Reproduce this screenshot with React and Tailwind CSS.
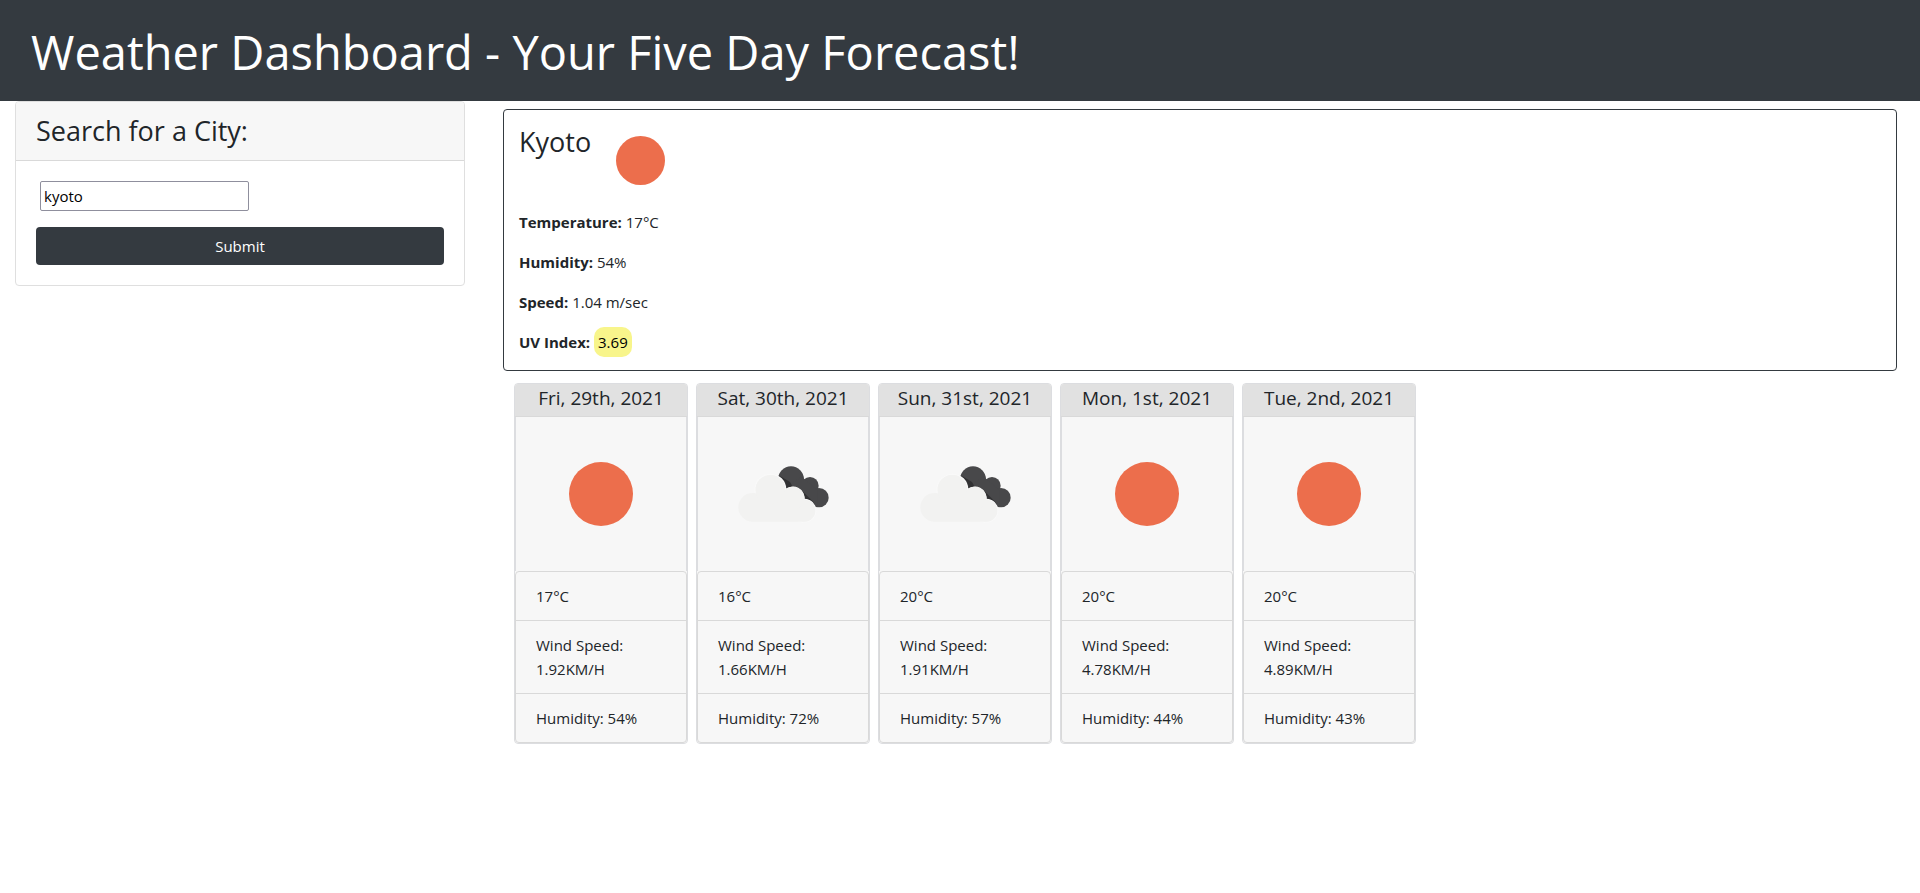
import { useState } from "react";

const forecast = [
  { date: "Fri, 29th, 2021", icon: "sun", temp: "17°C", wind: "1.92KM/H", humidity: "54%" },
  { date: "Sat, 30th, 2021", icon: "clouds", temp: "16°C", wind: "1.66KM/H", humidity: "72%" },
  { date: "Sun, 31st, 2021", icon: "clouds", temp: "20°C", wind: "1.91KM/H", humidity: "57%" },
  { date: "Mon, 1st, 2021", icon: "sun", temp: "20°C", wind: "4.78KM/H", humidity: "44%" },
  { date: "Tue, 2nd, 2021", icon: "sun", temp: "20°C", wind: "4.89KM/H", humidity: "43%" },
];

function Sun({ className }) {
  return (
    <svg viewBox="0 0 64 64" className={className} role="img" aria-label="Clear sky">
      <circle cx="32" cy="32" r="32" fill="#ec6e4c" />
    </svg>
  );
}

function Clouds() {
  return (
    <svg viewBox="-6 -3 330 270" className="h-[90px] w-[110px]" role="img" aria-label="Broken clouds">
      <g fill="#48484a">
        <circle cx="183" cy="88" r="39" />
        <circle cx="240" cy="107" r="26" />
        <circle cx="267" cy="143" r="29" />
        <path d="M170 110L215 80L262 120L262 172L200 150Z" />
      </g>
      <g fill="#1f1f20">
        <path d="M145 75Q170 92 171 121Q178 114 190 114L180 96Z" opacity=".55" />
        <path d="M212 118Q224 134 220 151Q240 149 258 171L250 156Z" opacity=".55" />
      </g>
      <g fill="#f2f2f1" stroke="#f9f9f9" strokeWidth="4">
        <circle cx="121" cy="119" r="46" />
        <circle cx="187" cy="147" r="35" />
        <circle cx="223" cy="182" r="34" />
      </g>
      <path
        d="M68 129A43 43 0 0 0 68 215H223A33 33 0 0 0 223 149A34 34 0 0 0 165 120A44 44 0 0 0 78 130Z"
        fill="#f2f2f1"
      />
      <circle cx="121" cy="119" r="44" fill="#f2f2f1" />
      <circle cx="187" cy="147" r="33" fill="#f2f2f1" />
    </svg>
  );
}

function Reading({ label, children }) {
  return (
    <p className="mb-4">
      <strong className="font-bold">{label}</strong> {children}
    </p>
  );
}

function DayCard({ day }) {
  return (
    <article className="w-[174px] rounded border border-[#dcdde0] bg-[#f7f7f7]">
      <h2 className="h-[33px] rounded-t-[3px] border-b border-[#d9d9d9] bg-[#e1e1e1] text-center text-[19px] leading-7">
        {day.date}
      </h2>
      <div className="border-x border-[#dcdde0]">
        <div className="flex h-[154px] items-center justify-center">
          {day.icon === "sun" ? <Sun className="size-16" /> : <Clouds />}
        </div>
      </div>
      <ul className="divide-y divide-[#d9d9d9] rounded border border-[#d9d9d9]">
        <li className="px-5 py-3">{day.temp}</li>
        <li className="px-5 py-3">
          Wind Speed:
          <br />
          {day.wind}
        </li>
        <li className="px-5 py-3">Humidity: {day.humidity}</li>
      </ul>
    </article>
  );
}

export default function App() {
  const [city, setCity] = useState("kyoto");

  return (
    <div className="font-['Open_Sans','Noto_Sans',sans-serif] text-[15px] leading-6 text-[#212529]">
      <header className="bg-[#343a40] px-[31px] pt-5 pb-4 text-white">
        <h1 className="text-[47px] leading-[65px]">Weather Dashboard - Your Five Day Forecast!</h1>
      </header>

      <div className="flex items-start">
        <aside className="w-1/4 px-[15px]">
          <form
            className="rounded border border-[#dfdfdf]"
            onSubmit={(event) => event.preventDefault()}
          >
            <div className="rounded-t-[3px] border-b border-[#d9d9d9] bg-[#f7f7f7] px-5 py-3">
              <label htmlFor="city" className="block text-[27px] leading-[34px]">
                Search for a City:
              </label>
            </div>
            <div className="p-5">
              <input
                id="city"
                type="text"
                value={city}
                onChange={(event) => setCity(event.target.value)}
                className="mb-4 ml-1 block h-[30px] w-[209px] rounded-[2px] border border-[#8f8f9d] bg-white px-[3px] text-black"
              />
              <button
                type="submit"
                className="block w-full rounded bg-[#343a40] py-[7px] text-center text-white"
              >
                Submit
              </button>
            </div>
          </form>
        </aside>

        <main className="w-3/4 px-[23px] pt-2">
          <section className="rounded border border-[#343a40] px-[15px] pt-[7px]">
            <div className="flex items-start gap-[25px]">
              <h2 className="pt-2 text-[27px] leading-[34px]">Kyoto</h2>
              <Sun className="mt-[19px] mb-[13px] size-[49px]" />
            </div>
            <div className="pt-3">
              <Reading label="Temperature:">17°C</Reading>
              <Reading label="Humidity:">54%</Reading>
              <Reading label="Speed:">1.04 m/sec</Reading>
              <Reading label="UV Index:">
                <span className="rounded-[10px] bg-[#f8f58b] px-1 py-[5px] text-black">3.69</span>
              </Reading>
            </div>
          </section>

          <section className="flex flex-wrap gap-2 px-[11px] pt-3">
            {forecast.map((day) => (
              <DayCard key={day.date} day={day} />
            ))}
          </section>
        </main>
      </div>
    </div>
  );
}
